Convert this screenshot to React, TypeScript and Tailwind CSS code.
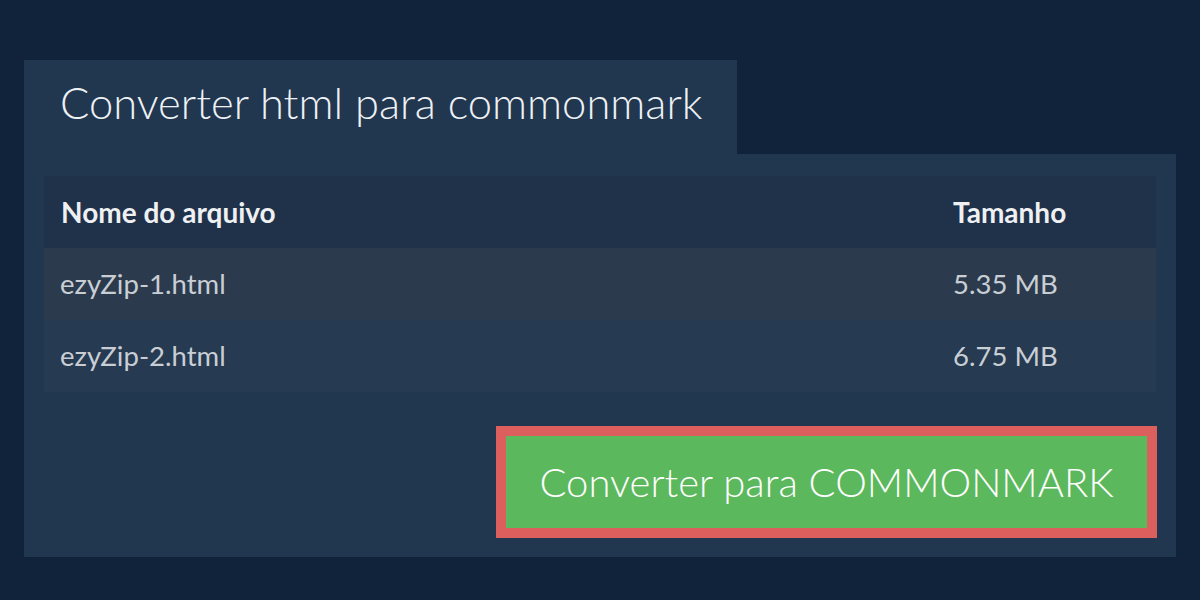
import React from "react";

const files = [
    { name: "ezyZip-1.html", size: "5.35 MB" },
    { name: "ezyZip-2.html", size: "6.75 MB" },
];

const App: React.FC = () => {
    return (
        <div className="w-[1200px] h-[600px] bg-[#10233a] pt-[60px] px-6 font-['Lato','Liberation_Sans',sans-serif]">
            {/* Tab header */}
            <div className="w-[713px] h-[94px] bg-[#21364f] pl-9 flex items-center">
                <h1 className="text-[43.5px] font-light text-[#eef1f4] leading-none -mt-2">
                    Converter html para commonmark
                </h1>
            </div>

            {/* Panel body */}
            <div className="bg-[#21364f] pt-[22px] px-5 pb-[19px]">
                {/* Table */}
                <div className="w-full">
                    <div className="grid grid-cols-[892px_1fr] h-[72px] items-center bg-[#1f324a] text-[#eef0f2] text-[28px] font-bold">
                        <div className="px-[17px]">Nome do arquivo</div>
                        <div className="px-[17px]">Tamanho</div>
                    </div>
                    {files.map((f, i) => (
                        <div
                            key={f.name}
                            className={
                                i % 2 === 0
                                    ? "grid grid-cols-[892px_1fr] h-[72px] items-center bg-[#2b3b4d] text-[#c9ced5] text-[27.5px]"
                                    : "grid grid-cols-[892px_1fr] h-[72px] items-center bg-[#263a51] text-[#c9ced5] text-[27.5px]"
                            }
                        >
                            <div className="px-[16px]">{f.name}</div>
                            <div className="px-[17px]">{f.size}</div>
                        </div>
                    ))}
                </div>

                {/* Convert button */}
                <div className="flex justify-end mt-[34px] -mr-px">
                    <button className="w-[661px] h-[112px] border-[10px] border-[#dc5f5d] bg-[#5cb85c] text-white text-[40px] font-light flex items-center justify-center">
                        Converter para COMMONMARK
                    </button>
                </div>
            </div>
        </div>
    );
};

export default App;
